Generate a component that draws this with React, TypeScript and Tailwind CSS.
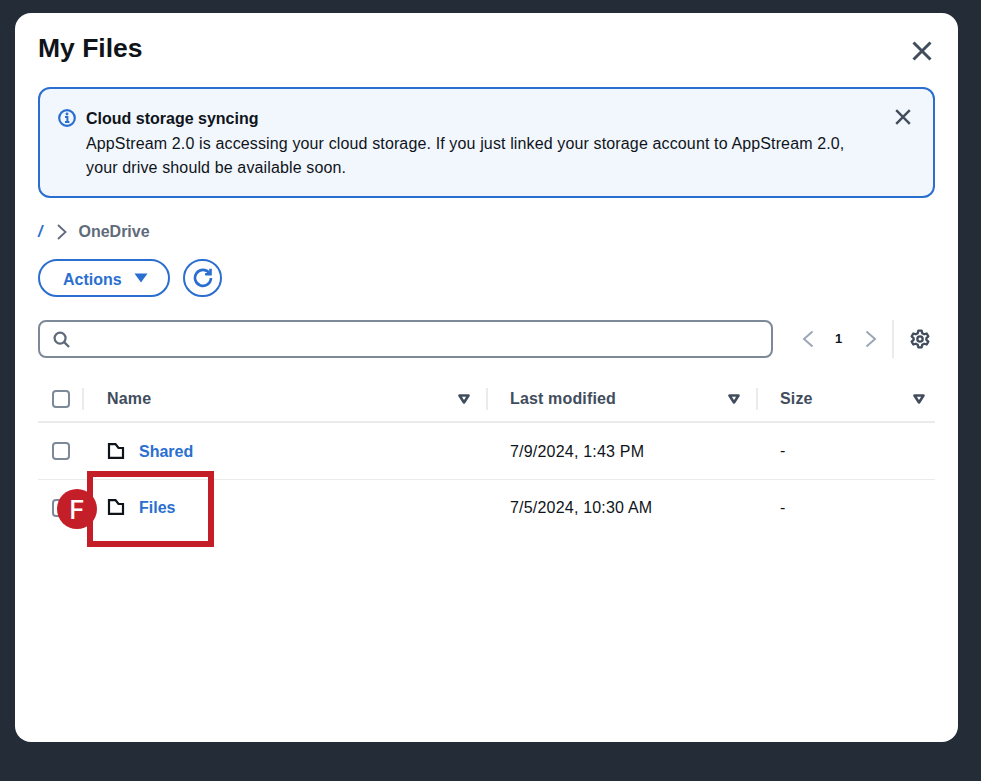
const blue = 'text-[#2a6fd0]';

function CloseIcon({ className }: { className: string }) {
  return (
    <svg viewBox="0 0 20 20" className={className} fill="none" stroke="currentColor" strokeWidth="3">
      <path d="M1.5 1.5l17 17M18.5 1.5l-17 17" />
    </svg>
  );
}

function SortIcon() {
  return (
    <svg viewBox="0 0 12 10" className="w-[12px] h-[10px] text-[#414d5c]" fill="none" stroke="currentColor" strokeWidth="2.6" strokeLinejoin="round">
      <path d="M1.5 1.5h9L6 8.500z" />
    </svg>
  );
}

function Divider() {
  return <div className="w-[2px] h-[22px] bg-[#e9ebed]" />;
}

function Checkbox() {
  return <div className="w-[18px] h-[18px] rounded-[4px] border-2 border-[#7d8998] bg-white" />;
}

function FolderIcon() {
  return (
    <svg viewBox="0 0 18 16" className="w-[18px] h-[16px] text-[#0f141a] -mt-[1px]" fill="none" stroke="currentColor" strokeWidth="2.200" strokeLinejoin="miter">
      <path d="M2 1.100h6.500l3 3.900h4.500v9.900H2z" />
    </svg>
  );
}

function HeaderCell({ label, width, last }: { label: string; width: string; last?: boolean }) {
  return (
    <div className={`flex items-center ${width}`}>
      <span className="pt-[1px] text-[16px] font-bold text-[#414d5c] tracking-[0.15px]">{label}</span>
      <div className={`ml-auto ${last ? 'mr-[10px]' : 'mr-[16px]'}`}>
        <SortIcon />
      </div>
      {!last && <Divider />}
    </div>
  );
}

function FileRow({ name, modified, border }: { name: string; modified: string; border?: boolean }) {
  return (
    <div className={`flex items-center text-[16px] ${border ? 'h-[57px] border-b border-[#e9ebed]' : 'h-[55px]'}`}>
      <div className="w-[69px] pl-[14px]">
        <Checkbox />
      </div>
      <div className="w-[403px] flex items-center gap-[14px]">
        <FolderIcon />
        <span className={`${border ? 'pt-[1px]' : ''} font-bold ${blue}`}>{name}</span>
      </div>
      <div className={`${border ? 'pt-[1px]' : ''} w-[270px] text-[#0f141a] tracking-[0.2px]`}>{modified}</div>
      <div className="text-[#0f141a]">-</div>
    </div>
  );
}

export default function App() {
  return (
    <div className="w-[981px] h-[781px] bg-[#242c37] pt-[13px] pl-[15px] font-['Liberation_Sans',sans-serif]">
      <div className="relative w-[943px] h-[729px] bg-white rounded-[16px] pl-[23px] pr-[23px]">
        {/* title */}
        <div className="flex items-start justify-between h-[74px]">
          <h1 className="text-[26.500px] leading-[30px] mt-[20px] font-bold text-[#0f141a]">My Files</h1>
          <div className="mt-[28px] mr-[3px] text-[#414d5c]">
            <CloseIcon className="w-[20px] h-[20px]" />
          </div>
        </div>

        {/* alert */}
        <div className="relative flex h-[111px] border-2 border-[#2a6fd0] rounded-[12px] bg-[#f2f7fe] pl-[18px] pt-[18px]">
          <svg viewBox="0 0 18 18" className={`w-[18px] h-[18px] mt-[2px] ${blue}`} fill="none" stroke="currentColor">
            <circle cx="9" cy="9" r="7.800" strokeWidth="2.200" />
            <path d="M7 8h2.400v4.600M7 13h4.400" strokeWidth="2" />
            <circle cx="9" cy="5" r="1.400" fill="currentColor" stroke="none" />
          </svg>
          <div className="ml-[10px] text-[16px] leading-[24.500px] text-[#0f141a]">
            <div className="font-bold">Cloud storage syncing</div>
            <div className="w-[770px] tracking-[0.135px]">
              AppStream 2.0 is accessing your cloud storage. If you just linked your storage account to AppStream 2.0,
              your drive should be available soon.
            </div>
          </div>
          <div className="absolute right-[22px] top-[20px] text-[#414d5c]">
            <CloseIcon className="w-[16px] h-[16px]" />
          </div>
        </div>

        {/* breadcrumb */}
        <div className="flex items-center h-[24px] mt-[22px] text-[16px]">
          <span className={`italic font-bold ${blue}`}>/</span>
          <svg viewBox="0 0 10 16" className="w-[10px] h-[16px] ml-[15px] text-[#5f6b7a]" fill="none" stroke="currentColor" strokeWidth="1.800">
            <path d="M1 1l7.500 7L1 15" />
          </svg>
          <span className="ml-[11px] font-bold text-[#5f6b7a]">OneDrive</span>
        </div>

        {/* actions */}
        <div className="flex items-center gap-[13px] mt-[15px]">
          <div className={`flex items-center w-[132px] h-[38px] rounded-full border-2 border-[#2a6fd0] pl-[23px] pt-[3px] text-[16px] font-bold ${blue}`}>
            Actions
            <svg viewBox="0 0 14 10" className="w-[14px] h-[10px] ml-[12px] -mt-[3px]" fill="currentColor">
              <path d="M0.500 0.500h13L7 9.500z" />
            </svg>
          </div>
          <div className={`flex items-center justify-center w-[39px] h-[38px] rounded-full border-2 border-[#2a6fd0] ${blue}`}>
            <svg viewBox="0 0 20 20" className="w-[20px] h-[20px]" fill="none" stroke="currentColor" strokeWidth="2.600">
              <path d="M16.500 5.200A8 8 0 1 0 18 10" />
              <path d="M17.500 0.800v5.400h-5.400" />
            </svg>
          </div>
        </div>

        {/* search + pagination */}
        <div className="flex items-center mt-[23px]">
          <div className="flex items-center w-[735px] h-[38px] rounded-[8px] border-2 border-[#7d8998] pl-[13px]">
            <svg viewBox="0 0 18 18" className="w-[17px] h-[17px] text-[#5f6b7a]" fill="none" stroke="currentColor" strokeWidth="2.400">
              <circle cx="7.500" cy="7.500" r="5.800" />
              <path d="M11.800 11.800L17 17" />
            </svg>
          </div>
          <svg viewBox="0 0 12 18" className="w-[12px] h-[18px] ml-[29px] text-[#9ba7b6]" fill="none" stroke="currentColor" strokeWidth="2">
            <path d="M10.500 1.500L2 9l8.500 7.500" />
          </svg>
          <span className="w-[14px] ml-[21px] text-[13px] font-bold text-[#0f141a]">1</span>
          <svg viewBox="0 0 12 18" className="w-[12px] h-[18px] ml-[16px] text-[#9ba7b6]" fill="none" stroke="currentColor" strokeWidth="2">
            <path d="M1.500 1.500L10 9l-8.500 7.500" />
          </svg>
          <div className="w-[2px] h-[38px] bg-[#e9ebed] ml-[15px]" />
          <svg viewBox="0 0 24 24" className="w-[20px] h-[20px] ml-[16px] text-[#414d5c]" fill="none" stroke="currentColor" strokeWidth="2.800" strokeLinejoin="round">
            <circle cx="12" cy="12" r="3.200" />
            <path d="M10 2h4l.7 3 2.300 1.300 3-.9 2 3.400-2.300 2.100v2.200l2.300 2.100-2 3.400-3-.9-2.300 1.300-.7 3h-4l-.7-3L7 17.700l-3 .9-2-3.400 2.300-2.100v-2.200L2 8.800l2-3.400 3 .9L9.300 5z" />
          </svg>
        </div>

        {/* table header */}
        <div className="flex items-center h-[47px] mt-[18px] border-b-2 border-[#e9ebed]">
          <div className="flex items-center w-[69px] pl-[14px]">
            <Checkbox />
            <div className="ml-[12px]">
              <Divider />
            </div>
          </div>
          <HeaderCell label="Name" width="w-[381px]" />
          <div className="w-[22px]" />
          <HeaderCell label="Last modified" width="w-[248px]" />
          <div className="w-[22px]" />
          <div className="flex-1">
            <HeaderCell label="Size" width="w-full" last />
          </div>
        </div>

        <FileRow name="Shared" modified="7/9/2024, 1:43 PM" border />
        <FileRow name="Files" modified="7/5/2024, 10:30 AM" />

        {/* callout over the Files row */}
        <div className="absolute left-[72px] top-[458px] w-[127px] h-[76px] border-[6px] border-[#c41e28]" />
        <div className="absolute left-[42px] top-[476px] flex items-center justify-center w-[40px] h-[40px] rounded-full bg-[#c41e28] text-white text-[26px] font-medium font-['Inter',sans-serif]">
          F
        </div>
      </div>
    </div>
  );
}
